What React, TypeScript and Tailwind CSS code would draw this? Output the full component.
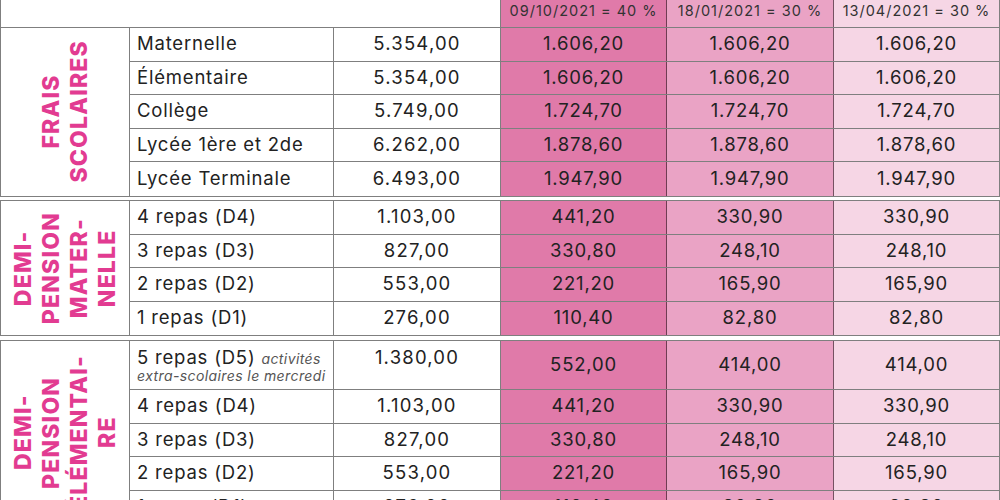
type Row = {
    label: string;
    note?: string;
    price: string;
    p1: string;
    p2: string;
    p3: string;
    tall?: boolean;
};

type Section = {
    title: string[];
    rows: Row[];
};

const sections: Section[] = [
    {
        title: ['FRAIS', 'SCOLAIRES'],
        rows: [
            { label: 'Maternelle', price: '5.354,00', p1: '1.606,20', p2: '1.606,20', p3: '1.606,20' },
            { label: 'Élémentaire', price: '5.354,00', p1: '1.606,20', p2: '1.606,20', p3: '1.606,20' },
            { label: 'Collège', price: '5.749,00', p1: '1.724,70', p2: '1.724,70', p3: '1.724,70' },
            { label: 'Lycée 1ère et 2de', price: '6.262,00', p1: '1.878,60', p2: '1.878,60', p3: '1.878,60' },
            { label: 'Lycée Terminale', price: '6.493,00', p1: '1.947,90', p2: '1.947,90', p3: '1.947,90' },
        ],
    },
    {
        title: ['DEMI-', 'PENSION', 'MATER-', 'NELLE'],
        rows: [
            { label: '4 repas (D4)', price: '1.103,00', p1: '441,20', p2: '330,90', p3: '330,90' },
            { label: '3 repas (D3)', price: '827,00', p1: '330,80', p2: '248,10', p3: '248,10' },
            { label: '2 repas (D2)', price: '553,00', p1: '221,20', p2: '165,90', p3: '165,90' },
            { label: '1 repas (D1)', price: '276,00', p1: '110,40', p2: '82,80', p3: '82,80' },
        ],
    },
    {
        title: ['DEMI-', 'PENSION', 'ÉLÉMENTAI-', 'RE'],
        rows: [
            {
                label: '5 repas (D5)',
                note: 'activités',
                price: '1.380,00',
                p1: '552,00',
                p2: '414,00',
                p3: '414,00',
                tall: true,
            },
            { label: '4 repas (D4)', price: '1.103,00', p1: '441,20', p2: '330,90', p3: '330,90' },
            { label: '3 repas (D3)', price: '827,00', p1: '330,80', p2: '248,10', p3: '248,10' },
            { label: '2 repas (D2)', price: '553,00', p1: '221,20', p2: '165,90', p3: '165,90' },
            { label: '1 repas (D1)', price: '276,00', p1: '110,40', p2: '82,80', p3: '82,80' },
        ],
    },
];

function TableRow({ row }: { row: Row }) {
    return (
        <div
            className={`flex border-b border-black/50 last:border-b-0 ${
                row.tall ? 'h-[49.5px]' : 'h-[33.5px]'
            }`}
        >
            <div
                className={`w-[204px] border-r border-black/50 pl-[7px] flex ${
                    row.tall ? 'flex-col justify-start pt-[7px]' : 'items-center'
                }`}
            >
                {row.tall ? (
                    <>
                        <p className="leading-[19px]">
                            {row.label}{' '}
                            <span className="italic text-[14px] text-[#555] tracking-[0.4px]">
                                {row.note}
                            </span>
                        </p>
                        <p className="italic text-[14px] leading-[16px] text-[#555] tracking-[0.4px]">
                            extra-scolaires le mercredi
                        </p>
                    </>
                ) : (
                    <p>{row.label}</p>
                )}
            </div>
            <div
                className={`w-[167px] border-r border-black/50 flex justify-center ${
                    row.tall ? 'items-start pt-[7px]' : 'items-center'
                }`}
            >
                <p className={`tracking-[1.2px] ${row.tall ? 'leading-[19px]' : ''}`}>{row.price}</p>
            </div>
            <div className="w-[166px] border-r border-black/50 bg-[#e07aa9] flex items-center justify-center">
                {row.p1}
            </div>
            <div className="w-[167px] border-r border-black/50 bg-[#eaa3c5] flex items-center justify-center">
                {row.p2}
            </div>
            <div className="w-[165px] bg-[#f6d6e5] flex items-center justify-center">{row.p3}</div>
        </div>
    );
}

export default function App() {
    return (
        <div
            className="w-[1000px] h-[500px] overflow-hidden bg-white text-[#222] text-[18.5px] tracking-[0.8px]"
            style={{ fontFamily: 'Inter, "Noto Sans", sans-serif' }}
        >
            <div className="flex h-[28px] border-x border-b border-black/50 text-[14.5px] tracking-[1px] text-[#333]">
                <div className="w-[500px] border-r border-black/50" />
                <div className="w-[166px] border-r border-black/50 bg-[#e07aa9] text-center">
                    09/10/2021 = 40 %
                </div>
                <div className="w-[167px] border-r border-black/50 bg-[#eaa3c5] text-center">
                    18/01/2021 = 30 %
                </div>
                <div className="w-[165px] bg-[#f6d6e5] text-center">13/04/2021 = 30 %</div>
            </div>
            {sections.map((section, i) => (
                <div
                    key={i}
                    className={`flex border-x border-b border-black/50 ${
                        i > 0 ? 'mt-[3.5px] border-t' : ''
                    }`}
                >
                    <div className="w-[129px] border-r border-black/50 flex items-center justify-center">
                        <p className="[writing-mode:vertical-rl] rotate-180 text-center text-[23px] leading-[28px] font-extrabold tracking-[1.2px] text-[#e23b91]">
                            {section.title.map((line, j) => (
                                <span key={j} className="block">
                                    {line}
                                </span>
                            ))}
                        </p>
                    </div>
                    <div className="flex flex-col">
                        {section.rows.map((row, j) => (
                            <TableRow key={j} row={row} />
                        ))}
                    </div>
                </div>
            ))}
        </div>
    );
}
